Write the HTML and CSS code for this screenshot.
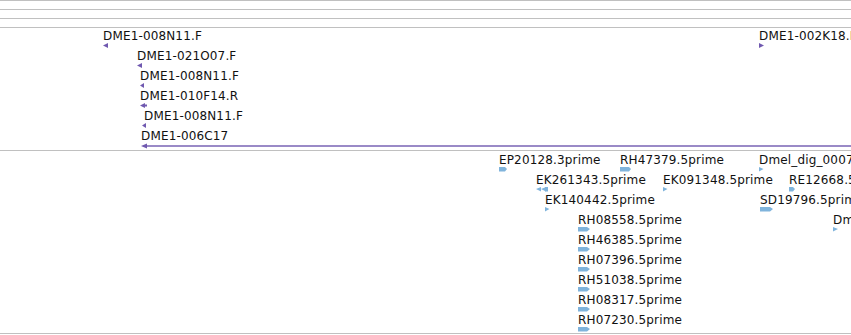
FILE: index.html
```html
<!DOCTYPE html>
<html>
<head>
<meta charset="utf-8">
<link rel="stylesheet" href="styles.css">
</head>
<body>
<div class="view">
  <div class="rule"></div>
  <div class="rule"></div>
  <div class="rule"></div>
  <div class="track track-clones">
    <div class="feat" style="left:103px;top:1px"><span class="lbl">DME1-008N11.F</span><svg class="glyph" width="5" height="6"><polygon class="purple" points="0,2.5 5,0 5,5"/></svg></div>
    <div class="feat" style="left:137px;top:21px"><span class="lbl">DME1-021O07.F</span><svg class="glyph" width="6" height="6"><polygon class="purple" points="0,2.5 5,0 5,5"/></svg></div>
    <div class="feat" style="left:140px;top:41px"><span class="lbl">DME1-008N11.F</span><svg class="glyph" width="5" height="6"><polygon class="purple" points="0,2.5 4,0 4,5"/></svg></div>
    <div class="feat" style="left:140px;top:61px"><span class="lbl">DME1-010F14.R</span><svg class="glyph" width="7" height="6"><polygon class="purple" points="0,2.5 5,0 5,1.5 7,1.5 7,3.5 5,3.5 5,5"/></svg></div>
    <div class="feat" style="left:142px;top:81px"><span class="lbl shift">DME1-008N11.F</span><svg class="glyph" width="5" height="6"><polygon class="purple" points="0,2.5 4,0 4,5"/></svg></div>
    <div class="feat" style="left:141px;top:101px"><span class="lbl">DME1-006C17</span><svg class="glyph" width="710" height="6"><polygon class="purple" points="0,3 6,0.5 6,5.5"/><rect class="purple" x="5" y="2.3" width="705" height="1.4"/></svg></div>
    <div class="feat" style="left:759px;top:1px"><span class="lbl">DME1-002K18.F</span><svg class="glyph" width="5" height="6"><polygon class="purple" points="0,0 5,2.5 0,5"/></svg></div>
  </div>
  <div class="track track-ests">
    <div class="feat" style="left:499px;top:2px"><span class="lbl">EP20128.3prime</span><svg class="glyph" width="9" height="5"><polygon class="blue" points="0,0 6,0 8,2 6,4.5 0,4.5"/></svg></div>
    <div class="feat" style="left:620px;top:2px"><span class="lbl">RH47379.5prime</span><svg class="glyph" width="12" height="5"><polygon class="blue" points="0,0 9,0 11,2 9,4.5 0,4.5"/></svg></div>
    <div class="feat" style="left:759px;top:2px"><span class="lbl">Dmel_dig_00078</span><svg class="glyph" width="5" height="5"><polygon class="blue" points="0,0 4.5,2 0,4.5"/></svg></div>
    <div class="feat" style="left:536px;top:22px"><span class="lbl">EK261343.5prime</span><svg class="glyph" width="13" height="5"><polygon class="blue" points="0,2 5,0 5,4.5"/><polygon class="blue" points="5,2 10,0 10,4.5"/><rect class="blue" x="9" y="0" width="3" height="4.5"/></svg></div>
    <div class="feat" style="left:663px;top:22px"><span class="lbl">EK091348.5prime</span><svg class="glyph" width="5" height="5"><polygon class="blue" points="0,0 4.5,2 0,4.5"/></svg></div>
    <div class="feat" style="left:789px;top:22px"><span class="lbl">RE12668.5prime</span><svg class="glyph" width="7" height="5"><polygon class="blue" points="0,0 4,0 6,2 4,4.5 0,4.5"/></svg></div>
    <div class="feat" style="left:545px;top:42px"><span class="lbl">EK140442.5prime</span><svg class="glyph" width="5" height="5"><polygon class="blue" points="0,0 4.5,2 0,4.5"/></svg></div>
    <div class="feat" style="left:760px;top:42px"><span class="lbl">SD19796.5prime</span><svg class="glyph" width="14" height="5"><polygon class="blue" points="0,0 10,0 13,2 10,4.5 0,4.5"/></svg></div>
    <div class="feat" style="left:833px;top:62px"><span class="lbl">Dmel_dig_0012</span><svg class="glyph" width="6" height="5"><polygon class="blue" points="0,0 5,2 0,4.5"/></svg></div>
    <div class="feat" style="left:578px;top:62px"><span class="lbl">RH08558.5prime</span><svg class="glyph" width="13" height="5"><polygon class="blue" points="0,0 9,0 12,2 9,4.5 0,4.5"/></svg></div>
    <div class="feat" style="left:578px;top:82px"><span class="lbl">RH46385.5prime</span><svg class="glyph" width="13" height="5"><polygon class="blue" points="0,0 9,0 12,2 9,4.5 0,4.5"/></svg></div>
    <div class="feat" style="left:578px;top:102px"><span class="lbl">RH07396.5prime</span><svg class="glyph" width="13" height="5"><polygon class="blue" points="0,0 9,0 12,2 9,4.5 0,4.5"/></svg></div>
    <div class="feat" style="left:578px;top:122px"><span class="lbl">RH51038.5prime</span><svg class="glyph" width="13" height="5"><polygon class="blue" points="0,0 9,0 12,2 9,4.5 0,4.5"/></svg></div>
    <div class="feat" style="left:578px;top:142px"><span class="lbl">RH08317.5prime</span><svg class="glyph" width="13" height="5"><polygon class="blue" points="0,0 9,0 12,2 9,4.5 0,4.5"/></svg></div>
    <div class="feat" style="left:578px;top:162px"><span class="lbl">RH07230.5prime</span><svg class="glyph" width="13" height="5"><polygon class="blue" points="0,0 9,0 12,2 9,4.5 0,4.5"/></svg></div>
  </div>
</div>
</body>
</html>
```
FILE: styles.css
```css
html, body {
  margin: 0;
  padding: 0;
  background: #fff;
}
.view {
  width: 851px;
  height: 335px;
  overflow: hidden;
  font-family: "DejaVu Sans", sans-serif;
  font-size: 12px;
  letter-spacing: 0.15px;
  color: #111;
  border-top: 1px solid #c0c0c0;
  box-sizing: border-box;
}
.rule {
  height: 8px;
  border-bottom: 1px solid #c0c0c0;
}
.track {
  position: relative;
  border-bottom: 1px solid #c0c0c0;
  overflow: hidden;
}
.track-clones {
  height: 122px;
}
.track-ests {
  height: 182px;
}
.feat {
  position: absolute;
  white-space: nowrap;
}
.lbl {
  display: block;
  line-height: 14px;
  height: 14px;
}
.lbl.shift {
  padding-left: 2px;
}
.glyph {
  display: block;
}
.purple {
  fill: #7059b0;
}
.blue {
  fill: #80b4dc;
}
```
